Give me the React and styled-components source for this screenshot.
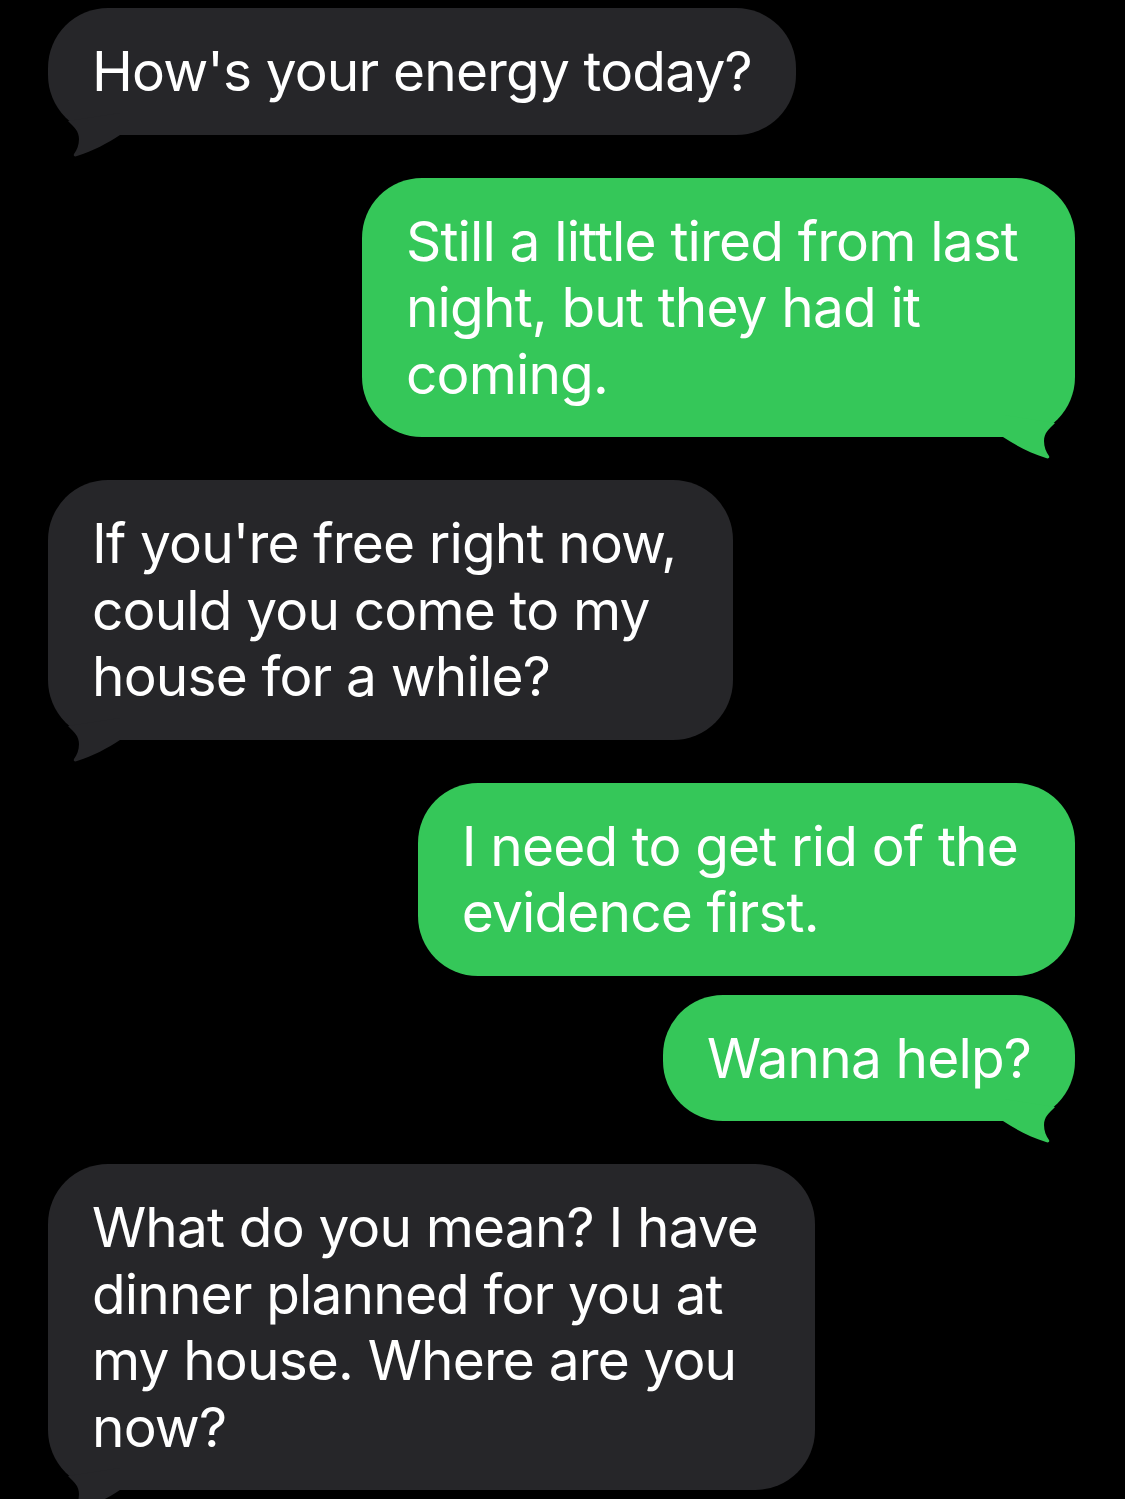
import React from 'react';
import styled, { createGlobalStyle } from 'styled-components';

const GlobalStyle = createGlobalStyle`
  html, body {
    margin: 0;
    background: #000000;
  }
  body {
    font-family: Inter, "Liberation Sans", sans-serif;
    -webkit-font-smoothing: antialiased;
  }
`

const Thread = styled.div`
  display: flex;
  flex-direction: column;
  gap: 43px;
  padding: 8px 50px 40px 48px;
  min-height: 100vh;
  box-sizing: border-box;
  overflow: hidden;
`

const Group = styled.div`
  display: flex;
  flex-direction: column;
  align-items: ${props => props.$me ? 'flex-end' : 'flex-start'};
  gap: 19px;
`

const Bubble = styled.div`
  position: relative;
  background: ${props => props.$me ? '#35c759' : '#262629'};
  color: #ffffff;
  border-radius: 60px;
  padding: 30px ${props => props.$wrapped ? '57px' : '44px'} 30px 44px;
  font-size: 55px;
  line-height: 66.5px;
  letter-spacing: -0.85px;
  white-space: nowrap;
`

const Tail = styled.svg`
  position: absolute;
  bottom: -30px;
  width: 80px;
  height: 60px;
  ${props => props.$me
    ? 'right: 0; transform: scaleX(-1);'
    : 'left: 0;'}
`

const BubbleTail = ({ me }) => (
  <Tail $me={me} viewBox="0 -30 80 60">
    <path
      d="M 20 -14 C 26 -8 31 -4 31 4 C 31 10 29 15 26 19 C 25 21 27 22 29 21 C 45 16 60 8 72 0 L 72 -22 Z"
      fill={me ? '#35c759' : '#262629'}
    />
  </Tail>
)

const messages = [
  { me: false, items: [["How's your energy today?"]] },
  { me: true, items: [['Still a little tired from last', 'night, but they had it', 'coming.']] },
  { me: false, items: [["If you're free right now,", 'could you come to my', 'house for a while?']] },
  { me: true, items: [['I need to get rid of the', 'evidence first.'], ['Wanna help?']] },
  { me: false, items: [['What do you mean? I have', 'dinner planned for you at', 'my house. Where are you', 'now?']] },
]

const App = () => {
  return (
    <>
      <GlobalStyle />
      <Thread>
        {messages.map((group, gi) => (
          <Group key={gi} $me={group.me}>
            {group.items.map((lines, i) => (
              <Bubble key={i} $me={group.me} $wrapped={lines.length > 1}>
                {lines.map((line, li) => (
                  <React.Fragment key={li}>
                    {li > 0 && <br />}
                    {line}
                  </React.Fragment>
                ))}
                {i === group.items.length - 1 && <BubbleTail me={group.me} />}
              </Bubble>
            ))}
          </Group>
        ))}
      </Thread>
    </>
  )
}

export default App
